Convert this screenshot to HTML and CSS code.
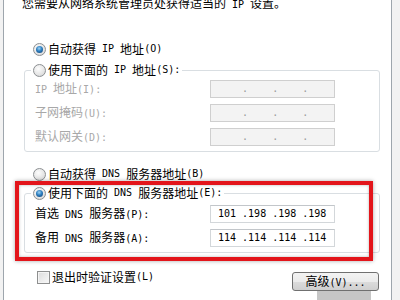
FILE: index.html
```html
<!DOCTYPE html>
<html lang="zh-CN">
<head>
  <meta charset="UTF-8" />
  <title>Internet 协议版本 4 (TCP/IPv4) 属性</title>
  <link rel="stylesheet" href="styles.css">
</head>
<body>
  <div class="screen">
    <div class="window">
      <p class="intro">您需要从网络系统管理员处获得适当的<span class="en"> IP </span>设置。</p>

      <label class="opt first"><span class="radio on"></span>自动获得<span class="en"> IP </span>地址<span class="en">(O)</span></label>
      <div class="group">
        <label class="opt legend"><span class="radio"></span>使用下面的<span class="en"> IP </span>地址<span class="en">(S):</span></label>
        <div class="fields">
          <span class="lbl off"><span class="en">IP </span>地址<span class="en">(I):</span></span>
          <span class="ip off">    .    .    .</span>
          <span class="lbl off">子网掩码<span class="en">(U):</span></span>
          <span class="ip off">    .    .    .</span>
          <span class="lbl off">默认网关<span class="en">(D):</span></span>
          <span class="ip off">    .    .    .</span>
        </div>
      </div>

      <label class="opt dns-auto"><span class="radio"></span>自动获得<span class="en"> DNS </span>服务器地址<span class="en">(B)</span></label>
      <div class="group dns">
        <label class="opt legend"><span class="radio on"></span>使用下面的<span class="en"> DNS </span>服务器地址<span class="en">(E):</span></label>
        <div class="fields">
          <span class="lbl">首选<span class="en"> DNS </span>服务器<span class="en">(P):</span></span>
          <span class="ip">101 .198 .198 .198</span>
          <span class="lbl">备用<span class="en"> DNS </span>服务器<span class="en">(A):</span></span>
          <span class="ip">114 .114 .114 .114</span>
        </div>
      </div>

      <div class="bottom">
        <label class="check"><span class="box"></span>退出时验证设置<span class="en">(L)</span></label>
        <div class="btn-col">
          <button class="btn">高级<span class="en">(V)...</span></button>
          <div class="next-btn"></div>
        </div>
      </div>
    </div>

    <div class="highlight"></div>
  </div>
</body>
</html>
```

FILE: styles.css
```css
body {
  margin: 0;
  background: #f2f2f2;
  font-family: "Noto Sans CJK SC", "Noto Sans", sans-serif;
  font-size: 12px;
  color: #000;
  overflow: hidden;
}
.screen {
  position: relative;
  width: 400px;
  height: 300px;
}
.window {
  margin-left: 3px;
  width: 387px;
  height: 300px;
  background: #fff;
  border-left: 1px solid #9ea6ad;
  border-right: 1px solid #9ea6ad;
  overflow: hidden;
}
.en {
  font-family: "DejaVu Sans Mono", "Liberation Mono", monospace;
  font-size: 10px;
  white-space: pre;
}
.intro {
  margin: -4px 0 0 18px;
  line-height: 14px;
  white-space: nowrap;
}

/* radio rows */
.opt {
  display: flex;
  align-items: center;
  height: 14px;
  line-height: 14px;
  white-space: nowrap;
}
.opt.first {
  margin-top: 30px;
  padding-left: 29px;
}
.opt.dns-auto {
  margin-top: 15px;
  padding-left: 29px;
}
.radio {
  box-sizing: border-box;
  width: 13px;
  height: 13px;
  margin-right: 2px;
  border-radius: 50%;
  border: 1px solid #8c8f92;
  background: radial-gradient(circle at 40% 35%, #fdfdfd 0%, #e4e4e4 60%, #cfcfcf 100%);
  position: relative;
  flex: none;
}
.radio.on::after {
  content: "";
  position: absolute;
  left: 2px;
  top: 2px;
  width: 7px;
  height: 7px;
  border-radius: 50%;
  background: radial-gradient(circle at 45% 35%, #9fd3f5 0%, #2d7fc0 45%, #0e3a6c 100%);
}

/* group boxes */
.group {
  margin: 14px 11px 0 20px;
  border: 1px solid #d9dee2;
  border-radius: 3px;
  padding-bottom: 5px;
}
.group.dns {
  margin-top: 12px;
}
.legend {
  width: max-content;
  margin: -8px 0 0 6px;
  padding: 0 2px;
  background: #fff;
}
.fields {
  display: grid;
  grid-template-columns: 175px 125px;
  row-gap: 6px;
  align-items: center;
  padding: 3px 0 0 10px;
}
.dns .fields {
  padding-top: 5px;
}
.lbl {
  line-height: 14px;
  white-space: nowrap;
}
.lbl.off {
  color: #a8a8a8;
}
.ip {
  box-sizing: border-box;
  height: 18px;
  padding-left: 7px;
  border: 1px solid #d3d7da;
  border-top-color: #c2c6ca;
  background: #fff;
  font-family: "DejaVu Sans Mono", "Liberation Mono", monospace;
  font-size: 10px;
  line-height: 16px;
  white-space: pre;
}
.ip.off {
  background: #f3f3f3;
  border-color: #cfcfcf;
  color: #9a9a9a;
}

/* bottom row */
.bottom {
  display: flex;
  justify-content: space-between;
  align-items: flex-start;
  margin-top: 17px;
  padding: 0 12px 0 33px;
}
.check {
  display: flex;
  align-items: center;
  height: 14px;
  line-height: 14px;
}
.box {
  box-sizing: border-box;
  width: 13px;
  height: 13px;
  margin-right: 2px;
  border: 1px solid #8e8f8f;
  background: linear-gradient(135deg, #dcdcdc, #f8f8f8);
  box-shadow: inset 0 0 0 1px #f4f4f4;
}
.btn-col {
  display: flex;
  flex-direction: column;
  align-items: flex-end;
  margin-top: 2px;
}
.btn {
  width: 87px;
  height: 19px;
  padding: 0;
  border: 1px solid #707070;
  border-radius: 3px;
  background: linear-gradient(#f3f3f3 0%, #ebebeb 50%, #dcdcdc 51%, #cfcfcf 100%);
  font-family: "Noto Sans CJK SC", sans-serif;
  font-size: 12px;
  line-height: 16px;
  color: #000;
}
.next-btn {
  width: 54px;
  height: 12px;
  margin-right: 8px;
  background: #c6c6c6;
}

/* red annotation */
.highlight {
  position: absolute;
  left: 15px;
  top: 181px;
  width: 358px;
  height: 80px;
  box-sizing: border-box;
  border: 4px solid #e3151b;
  box-shadow: 0 0 4px rgba(0, 0, 0, 0.35), inset 0 0 3px rgba(0, 0, 0, 0.3);
}
```
